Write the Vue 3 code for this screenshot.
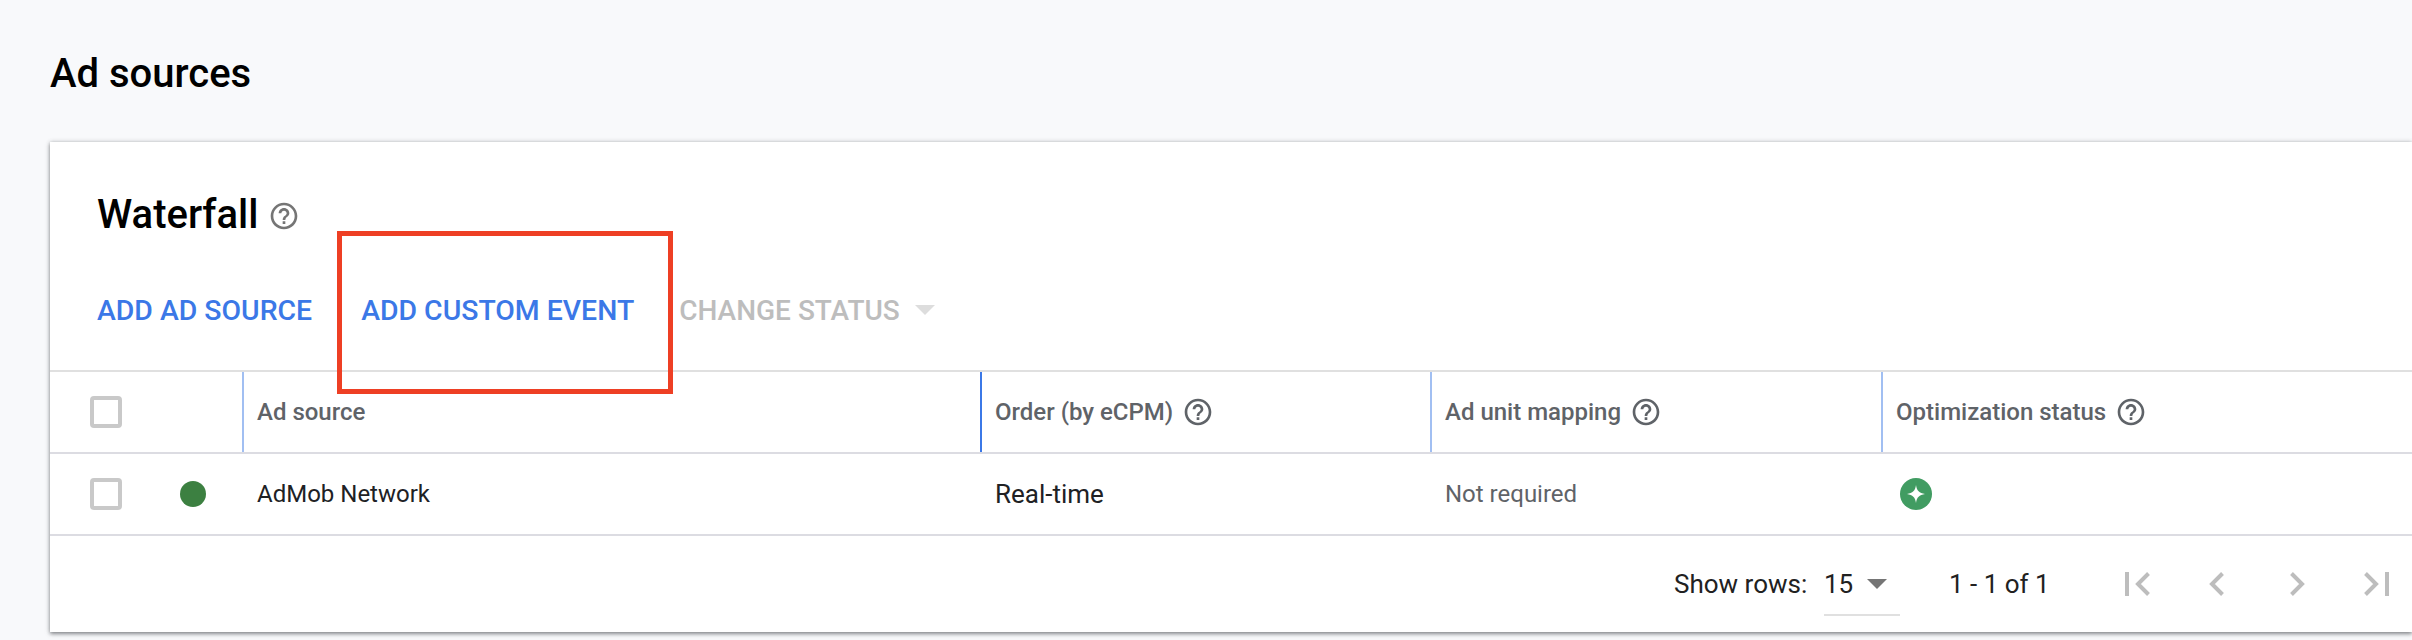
<script setup>
const columns = [
  { label: 'Order (by eCPM)', strong: true },
  { label: 'Ad unit mapping' },
  { label: 'Optimization status' }
]
const helpPath = 'M11 18h2v-2h-2v2zm1-16C6.48 2 2 6.48 2 12s4.48 10 10 10 10-4.48 10-10S17.52 2 12 2zm0 18c-4.41 0-8-3.59-8-8s3.59-8 8-8 8 3.59 8 8-3.59 8-8 8zm0-14c-2.21 0-4 1.79-4 4h2c0-1.1.9-2 2-2s2 .9 2 2c0 2-3 1.75-3 5h2c0-2.25 3-2.5 3-5 0-2.21-1.79-4-4-4z'
</script>

<template>
  <div class="page">
    <h1 class="page-title">Ad sources</h1>
    <section class="card">
      <div class="red-box"></div>
      <div class="card-head">
        <h2 class="card-title">Waterfall</h2>
        <svg class="help help-title" viewBox="0 0 24 24"><path :d="helpPath" /></svg>
      </div>
      <div class="toolbar">
        <span class="action first">ADD AD SOURCE</span>
        <span class="action second">ADD CUSTOM EVENT</span>
        <span class="action disabled">CHANGE STATUS</span>
        <span class="caret-disabled"></span>
      </div>
      <div class="table">
        <div class="row head-row">
          <div class="cell-check"><span class="checkbox"></span></div>
          <div class="cell-status"></div>
          <div class="th">Ad source</div>
          <div v-for="c in columns" :key="c.label" class="th" :class="{ strong: c.strong }">
            <span>{{ c.label }}</span>
            <svg class="help" viewBox="0 0 24 24"><path :d="helpPath" /></svg>
          </div>
        </div>
        <div class="row body-row">
          <div class="cell-check"><span class="checkbox"></span></div>
          <div class="cell-status"><span class="dot"></span></div>
          <div class="td source">AdMob Network</div>
          <div class="td">Real-time</div>
          <div class="td muted">Not required</div>
          <div class="td">
            <svg class="opt" viewBox="0 0 32 32">
              <circle cx="16" cy="16" r="16" fill="#419c62" />
              <path fill="#fff" d="M16 7C16.8 12.700 19.300 15.200 25 16 19.300 16.800 16.800 19.300 16 25 15.200 19.300 12.700 16.800 7 16 12.700 15.200 15.200 12.700 16 7Z" />
            </svg>
          </div>
        </div>
      </div>
      <div class="pager">
        <span class="rows-label">Show rows:</span>
        <div class="rows-select">
          <span>15</span>
          <span class="caret"></span>
        </div>
        <span class="range">1 - 1 of 1</span>
        <div class="nav">
          <svg viewBox="0 0 25 24" class="wide">
            <rect x="0" y="0" width="4" height="24" />
            <polyline points="23.500,1.500 13,12 23.500,22.500" />
          </svg>
          <svg viewBox="0 0 15 24" class="narrow gap-a">
            <polyline points="13.500,1.500 3,12 13.500,22.500" />
          </svg>
          <svg viewBox="0 0 15 24" class="narrow gap-b">
            <polyline points="1.500,1.500 12,12 1.500,22.500" />
          </svg>
          <svg viewBox="0 0 25 24" class="wide gap-a">
            <polyline points="1.500,1.500 12,12 1.500,22.500" />
            <rect x="21" y="0" width="4" height="24" />
          </svg>
        </div>
      </div>
    </section>
  </div>
</template>

<style>
html, body { margin: 0; background: #f8f9fb; overflow: hidden; }
</style>

<style scoped>
.page {
  height: 640px;
  box-sizing: border-box;
  padding: 50px 0 0 50px;
  overflow: hidden;
  background: #f8f9fb;
  font-family: Roboto, sans-serif;
}
.page-title {
  margin: 0;
  height: 48px;
  line-height: 48px;
  font-size: 40px;
  font-weight: 500;
  color: #000;
}
.card {
  position: relative;
  margin-top: 44px;
  height: 490px;
  background: #fff;
  box-shadow: 0 2px 4px rgba(60, 64, 67, .55), 0 0 4px rgba(60, 64, 67, .25);
}
.red-box {
  position: absolute;
  left: 287px;
  top: 89px;
  width: 336px;
  height: 163px;
  box-sizing: border-box;
  border: 5px solid #ee3f24;
  z-index: 2;
}
.card-head {
  display: flex;
  align-items: center;
  height: 48px;
  padding: 48px 0 0 47px;
}
.card-title {
  margin: 0;
  font-size: 40px;
  font-weight: 500;
  color: #000;
}
.help { width: 32px; height: 32px; fill: #5f6368; flex: none; }
.help-title { margin-left: 10px; margin-top: 4px; fill: #757575; }
.toolbar {
  display: flex;
  align-items: center;
  height: 120px;
  padding: 12px 0 0 47px;
  font-size: 28.4px;
  font-weight: 500;
}
.action { color: #3b78e7; }
.first { margin-right: 49px; }
.second { margin-right: 45px; }
.action.disabled { color: #bdbdbd; font-size: 28px; }
.caret-disabled {
  margin-left: 15px;
  border-left: 10px solid transparent;
  border-right: 10px solid transparent;
  border-top: 10px solid #ddd;
}
.table { border-top: 2px solid #e0e0e0; }
.row {
  display: grid;
  grid-template-columns: 100px 92px 738px 450px 451px 1fr;
  height: 80px;
  border-bottom: 2px solid #dcdce2;
  align-items: center;
}
.cell-check { padding-left: 40px; display: flex; }
.checkbox {
  width: 32px;
  height: 32px;
  box-sizing: border-box;
  border: 4px solid #c9c9c9;
  border-radius: 4px;
}
.cell-status { display: flex; padding-left: 30px; }
.dot { width: 26px; height: 26px; border-radius: 50%; background: #3c8041; }
.th {
  height: 100%;
  display: flex;
  align-items: center;
  gap: 9px;
  box-sizing: border-box;
  padding-left: 13px;
  border-left: 2px solid #a1bff2;
  font-size: 24px;
  font-weight: 500;
  color: #5f6368;
}
.th.strong { border-left-color: #3b78e7; }
.td { padding-left: 15px; font-size: 26px; color: #202124; display: flex; align-items: center; }
.td.source { font-size: 24px; }
.td.muted { color: #5f6368; font-size: 24px; }
.opt { width: 32px; height: 32px; margin-left: 4px; }
.pager {
  display: flex;
  align-items: center;
  height: 96px;
  padding-left: 1624px;
  font-size: 26px;
  color: #212121;
}
.rows-label { width: 150px; }
.rows-select {
  display: flex;
  align-items: center;
  position: relative;
  width: 76px;
  height: 40px;
}
.rows-select::after {
  content: '';
  position: absolute;
  left: 0;
  right: 0;
  bottom: -12px;
  height: 2px;
  background: #e0e0e0;
}
.caret {
  margin-left: 14px;
  border-left: 10px solid transparent;
  border-right: 10px solid transparent;
  border-top: 10px solid #757575;
}
.range { margin-left: 49px; width: 176px; }
.nav { display: flex; align-items: center; fill: #bdbdbd; }
.nav svg { height: 24px; flex: none; }
.nav polyline { fill: none; stroke: #bdbdbd; stroke-width: 4; }
.wide { width: 25px; }
.narrow { width: 15px; }
.gap-a { margin-left: 59px; }
.gap-b { margin-left: 66px; }
</style>
